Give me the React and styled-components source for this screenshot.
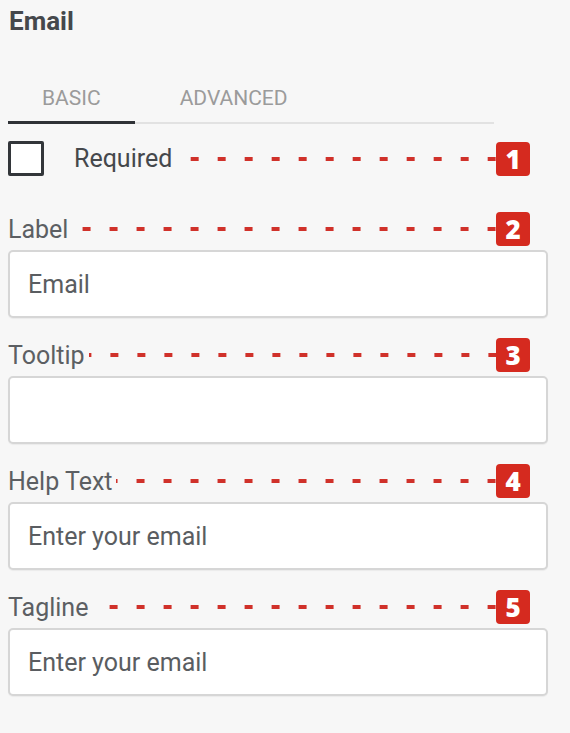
import React from "react";
import styled, { createGlobalStyle } from "styled-components";

const GlobalStyle = createGlobalStyle`
  body {
    margin: 0;
    background: #f7f7f7;
    font-family: Roboto, "Liberation Sans", Arial, sans-serif;
  }
`;

const Panel = styled.div`
  width: 570px;
  min-height: 733px;
  box-sizing: border-box;
  padding: 9px 22px 0 8px;
  background: #f7f7f7;
`;

const Title = styled.h1`
  margin: 0;
  padding-left: 1px;
  font-size: 26px;
  line-height: 25px;
  font-weight: 700;
  color: #45484c;
`;

const TabBar = styled.div`
  display: flex;
  gap: 11px;
  width: 486px;
  margin-top: 54px;
  border-bottom: 2px solid #e2e2e2;
`;

const Tab = styled.div`
  padding: 0 34px 12px;
  margin-bottom: -2px;
  font-size: 21px;
  line-height: 21px;
  text-transform: uppercase;
  color: #9b9b9b;
  border-bottom: 3px solid ${(p) => (p.$active ? "#2f3236" : "transparent")};
`;

const Row = styled.div`
  display: flex;
  align-items: center;
  height: ${(p) => p.$height || 34}px;
  width: 522px;
  margin-top: ${(p) => p.$top || 0}px;
`;

const CheckBox = styled.div`
  width: 36px;
  height: 35px;
  box-sizing: border-box;
  border: 3px solid #33363a;
  border-radius: 2px;
  background: #fff;
  margin-right: 30px;
  flex-shrink: 0;
`;

const CheckText = styled.span`
  font-size: 25px;
  line-height: 25px;
  color: #45484c;
`;

const LabelText = styled.span`
  font-size: 25px;
  line-height: 25px;
  color: #5c5f63;
`;

const Dashes = styled.div`
  flex: 1;
  height: 4px;
  margin-left: ${(p) => p.$gap || 4}px;
  background-image: linear-gradient(
    to right,
    transparent 0 19px,
    #d0312a 19px 27px
  );
  background-size: 27px 4px;
  background-repeat: repeat-x;
  background-position: right center;
`;

const Badge = styled.div`
  width: 34px;
  height: 34px;
  flex-shrink: 0;
  border-radius: 4px;
  background: #d52a1f;
  color: #fff;
  display: flex;
  align-items: center;
  justify-content: center;
  font-family: "Open Sans", Roboto, sans-serif;
  font-weight: 800;
  font-size: 26px;
  line-height: 1;
`;

const Field = styled.div`
  margin-top: ${(p) => p.$top}px;
`;

const TextBox = styled.input`
  display: block;
  width: 540px;
  height: 68px;
  box-sizing: border-box;
  margin-top: 4px;
  padding: 0 18px;
  border: 2px solid #d6d6d6;
  border-radius: 5px;
  background: #fff;
  box-shadow: 0 1px 1px rgba(0, 0, 0, 0.05);
  font-family: Roboto, "Liberation Sans", Arial, sans-serif;
  font-size: 25px;
  color: #5a5d61;
  outline: none;
`;

const fields = [
  { label: "Label", value: "Email" },
  { label: "Tooltip", value: "" },
  { label: "Help Text", value: "Enter your email" },
  { label: "Tagline", value: "Enter your email" },
];

export default function App() {
  return (
    <Panel>
      <GlobalStyle />
      <Title>Email</Title>
      <TabBar>
        <Tab $active>Basic</Tab>
        <Tab>Advanced</Tab>
      </TabBar>
      <Row $height={35} $top={17}>
        <CheckBox />
        <CheckText>Required</CheckText>
        <Dashes $gap={16} />
        <Badge>1</Badge>
      </Row>
      {fields.map((f, i) => (
        <Field key={f.label} $top={i === 0 ? 36 : 20}>
          <Row>
            <LabelText>{f.label}</LabelText>
            <Dashes />
            <Badge>{i + 2}</Badge>
          </Row>
          <TextBox readOnly value={f.value} />
        </Field>
      ))}
    </Panel>
  );
}
